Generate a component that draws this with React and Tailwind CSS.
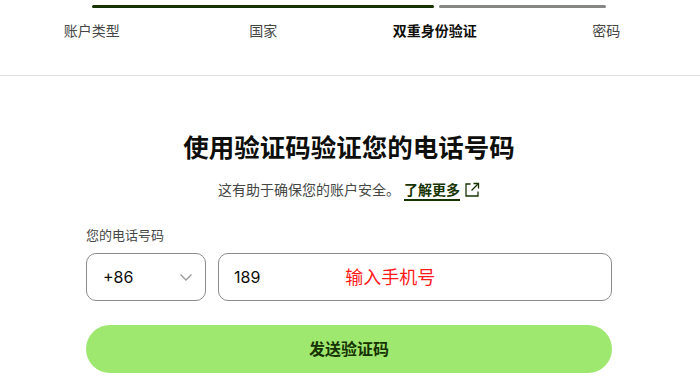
import React from "react";

const steps = [
  { label: "账户类型", active: false },
  { label: "国家", active: false },
  { label: "双重身份验证", active: true },
  { label: "密码", active: false },
];

const font = { fontFamily: "Inter, 'Noto Sans CJK SC', sans-serif" };

export default function App() {
  return (
    <div className="w-[700px] h-[378px] bg-white overflow-hidden" style={font}>
      {/* stepper */}
      <header className="h-[76px] border-b border-[#e2e2e2]">
        <div className="w-[686px] ml-[6px]">
          <div className="mx-[86px] pt-[5px] flex gap-[5px]">
            <div className="h-[3px] w-[342px] rounded-full bg-[#163300]" />
            <div className="h-[3px] flex-1 rounded-full bg-[#868685]" />
          </div>
          <div className="grid grid-cols-4 mt-[13px]">
            {steps.map((s, i) => (
              <div
                key={i}
                className={
                  s.active
                    ? "text-center text-[14px] leading-[20px] font-bold text-[#0e0f0c]"
                    : "text-center text-[14px] leading-[20px] text-[#454745]"
                }
              >
                {s.label}
              </div>
            ))}
          </div>
        </div>
      </header>

      <main className="w-[526px] ml-[86px] pt-[56px]">
        <h1 className="text-center text-[25.5px] leading-[32px] font-bold text-[#0e0f0c]">
          使用验证码验证您的电话号码
        </h1>
        <p className="mt-[16px] flex items-center justify-center text-[14px] leading-[20px] text-[#454745]">
          <span>这有助于确保您的账户安全。</span>
          <a className="ml-[4px] font-bold text-[#163300] underline underline-offset-[4px] decoration-[1.5px]">
            了解更多
          </a>
          <svg className="ml-[4px] w-[16px] h-[16px]" viewBox="0 0 16 16" fill="none" stroke="#163300" strokeWidth="1.3">
            <path d="M6.5 2H2v12h12V9.5" />
            <path d="M9.5 1.5h5v5" />
            <path d="M14.5 1.5 7.5 8.5" />
          </svg>
        </p>

        <label className="block mt-[26px] text-[13px] leading-[18px] text-[#454745]">您的电话号码</label>
        <div className="mt-[9px] flex gap-[12px]">
          <div className="w-[120px] h-[48px] rounded-[10px] border border-[#8c8c8c] flex items-center justify-between pl-[16px] pr-[12px]">
            <span className="text-[16px] text-[#0e0f0c]">+86</span>
            <svg className="w-[14px] h-[14px]" viewBox="0 0 14 14" fill="none" stroke="#9a9a9a" strokeWidth="1.3">
              <path d="M1.5 4.5 7 10l5.5-5.5" />
            </svg>
          </div>
          <div className="flex-1 h-[48px] rounded-[10px] border border-[#8c8c8c] flex items-center pl-[15px]">
            <span className="text-[16px] text-[#0e0f0c]">189</span>
            <span className="ml-[85px] text-[18px] text-[#ff1a1a]">输入手机号</span>
          </div>
        </div>

        <button className="mt-[24px] w-full h-[48px] rounded-full bg-[#9fe870] text-[16px] font-semibold text-[#163300]">
          发送验证码
        </button>
      </main>
    </div>
  );
}
